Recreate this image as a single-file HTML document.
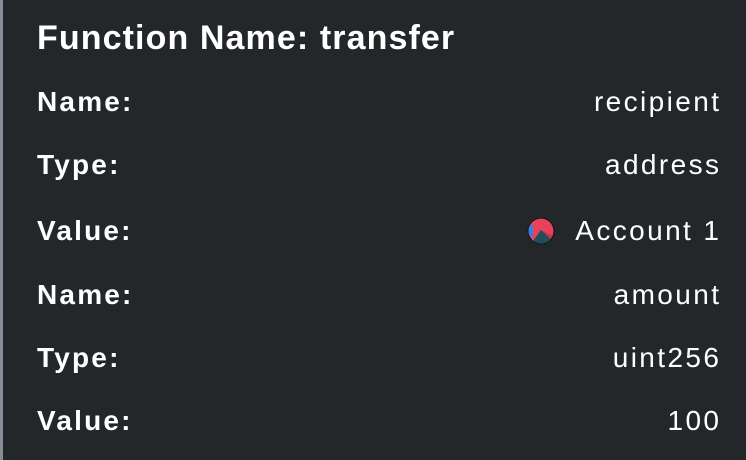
<!DOCTYPE html>
<html><head><style>
body{margin:0;width:746px;height:460px;background:#24272a;overflow:hidden;font-family:"Liberation Sans",sans-serif;color:#fff;position:relative}
.bar{position:absolute;left:0;top:0;width:3px;height:460px;background:#848c96}
.t{position:absolute;left:37px;top:19px;font-size:34px;font-weight:bold;letter-spacing:1.1px}
.r{position:absolute;left:37px;right:27px;height:34px;font-size:28px;display:flex;justify-content:space-between;align-items:center}
.r b{font-weight:bold;letter-spacing:2.2px}
.r span{letter-spacing:2.4px;margin-right:-2.4px}
.v{display:flex;align-items:center}
</style></head><body>
<div class="bar"></div>
<div class="t">Function Name: transfer</div>
<div class="r" style="top:85px"><b>Name:</b><span>recipient</span></div>
<div class="r" style="top:148px"><b>Type:</b><span>address</span></div>
<div class="r" style="top:214px"><b>Value:</b><span class="v"><svg width="28" height="28" viewBox="0 0 28 28" style="margin-right:20px"><defs><clipPath id="c"><circle cx="14" cy="14" r="12.5"/></clipPath></defs><circle cx="14" cy="14" r="13.5" fill="#111"/><g clip-path="url(#c)"><rect width="28" height="28" fill="#e8415a"/><rect x="0" y="8" width="6" height="12" fill="#3b7de0"/><polygon points="3,28 14,13 28,26 28,28" fill="#1f4f5e"/><polygon points="14,13 28,20 28,26" fill="#c8324a"/></g></svg>Account 1</span></div>
<div class="r" style="top:278px"><b>Name:</b><span>amount</span></div>
<div class="r" style="top:341px"><b>Type:</b><span>uint256</span></div>
<div class="r" style="top:404px"><b>Value:</b><span>100</span></div>
</body></html>
